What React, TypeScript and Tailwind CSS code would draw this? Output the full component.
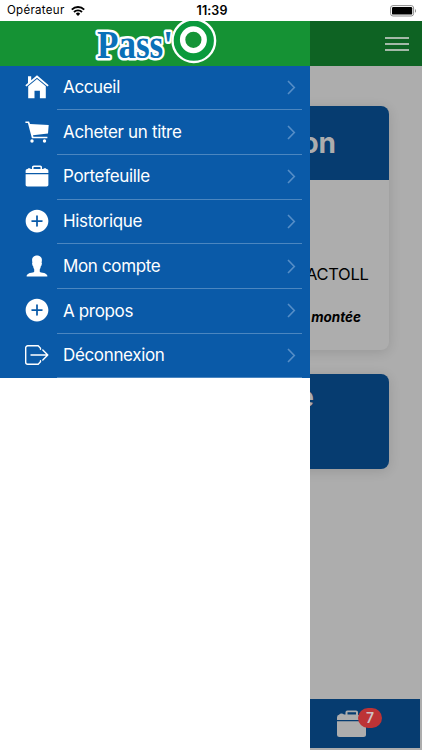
import type { ReactNode } from "react";
import { IoIosAddCircle, IoIosBriefcase, IoIosPerson } from "react-icons/io";

const menu: { label: string; icon: ReactNode }[] = [
  { label: "Accueil", icon: <HomeIcon /> },
  { label: "Acheter un titre", icon: <CartIcon /> },
  { label: "Portefeuille", icon: <IoIosBriefcase size={28} /> },
  { label: "Historique", icon: <IoIosAddCircle size={28} /> },
  { label: "Mon compte", icon: <IoIosPerson size={28} /> },
  { label: "A propos", icon: <IoIosAddCircle size={28} /> },
  { label: "Déconnexion", icon: <ExitIcon /> },
];

function HomeIcon() {
  return (
    <svg width="24" height="24" viewBox="0 0 24 24" fill="currentColor">
      <path d="M12 .3 23.700 10.200l-1.200 1.300L12 2.700 1.500 11.500.3 10.200 3 7.900V1.300h3.200v3.900Z" />
      <path d="m12 3.900 8.800 7.400V23.300h-5.900v-7.600H9.500v7.600H3.200V11.300Z" />
    </svg>
  );
}

function CartIcon() {
  return (
    <svg width="24" height="22" viewBox="0 0 24 22" fill="currentColor">
      <path d="M.4.6h3.700L5 3.100l18.700 1-.7 8.400L8 14.200l.4 1.600h14v1.500H6.900L2.900 2.100H.4Z" />
      <circle cx="7" cy="20" r="1.700" />
      <circle cx="19.500" cy="20" r="1.700" />
    </svg>
  );
}

function ExitIcon() {
  return (
    <svg width="24" height="20" viewBox="0 0 24 20" fill="none" stroke="currentColor" strokeWidth="1.4" strokeLinecap="round" strokeLinejoin="round">
      <path d="M15.500 4.200V3.200L13.200.8H2.700a2 2 0 0 0-2 2v14.400a2 2 0 0 0 2 2h10.500l2.300-2.400v-1" />
      <path d="M6 10h16.800M17.800 5l5 5-5 5" />
    </svg>
  );
}

function Logo() {
  return (
    <svg width="124" height="45" viewBox="92 20.500 124 45">
      <text
        x="96"
        y="57.500"
        textLength="76"
        lengthAdjust="spacingAndGlyphs"
        fontSize="39"
        fontWeight="700"
        fill="#0a70b8"
        stroke="#fff"
        strokeWidth="5"
        strokeLinejoin="round"
        paintOrder="stroke"
        className="font-['Liberation_Serif',serif]"
      >
        Pass'
      </text>
      <circle cx="192.800" cy="40.200" r="21.300" fill="#0a9a3c" stroke="#fff" strokeWidth="2.400" />
      <circle cx="192.400" cy="39.300" r="10.800" fill="#159437" stroke="#fff" strokeWidth="5.400" />
    </svg>
  );
}

function StatusBar() {
  return (
    <div className="flex h-[21px] shrink-0 items-center bg-white pr-[5px] pl-[7px] text-black">
      <div className="flex flex-1 items-center gap-1.5">
        <span className="pt-px text-[11.5px] tracking-[0.3px]">Opérateur</span>
        <svg width="14" height="10" viewBox="0 0 14 10" fill="none" stroke="#000" strokeWidth="1.9">
          <path d="M.8 3.6a8.8 8.8 0 0 1 12.4 0M3 6a5.7 5.7 0 0 1 8 0" />
          <path d="M4.8 7.7a3.1 3.1 0 0 1 4.4 0L7 10Z" fill="#000" stroke="none" />
        </svg>
      </div>
      <span className="pt-[2px] text-[12.5px] font-semibold tracking-[0.1px]">11:39</span>
      <div className="flex flex-1 justify-end">
        <svg width="27" height="12" viewBox="0 0 27 12">
          <rect x=".6" y=".6" width="23" height="10.4" rx="2.4" fill="#fff" stroke="#8d8d8d" />
          <rect x="2" y="2" width="20.2" height="7.6" rx="1.2" />
          <path d="M25 4v3.8c1.4-.5 1.4-3.3 0-3.8Z" fill="#8d8d8d" />
        </svg>
      </div>
    </div>
  );
}

function Drawer() {
  return (
    <aside className="absolute inset-y-0 left-0 flex w-[310px] flex-col bg-white">
      <div className="flex h-[44.5px] shrink-0 justify-center bg-[#159234]">
        <Logo />
      </div>
      <nav className="bg-[#0a5aa8] text-white">
        {menu.map((item) => (
          <a key={item.label} className="flex h-[44.7px] items-center">
            <span className="flex w-[57px] shrink-0 justify-center pb-0.5 pl-4">{item.icon}</span>
            <span className="mr-2 flex h-full flex-1 items-center justify-between border-b border-[#4b86c0] pr-[6px] pl-[6px] text-[17px] tracking-[-0.35px]">
              <span className="pt-px">{item.label}</span>
              <svg width="9" height="15" viewBox="0 0 9 15" fill="none" stroke="#568ec7" strokeWidth="1.6">
                <path d="m1 1 6.300 6.500L1 14" />
              </svg>
            </span>
          </a>
        ))}
      </nav>
    </aside>
  );
}

function Backdrop() {
  return (
    <main className="flex flex-1 flex-col bg-[#adadad]">
      <div className="flex h-[44.5px] shrink-0 items-center justify-end bg-[#0e6323] pt-px pr-[13px]">
        <div className="flex w-6 flex-col gap-1">
          <i className="h-0.5 bg-[#a4b9a8]" />
          <i className="h-0.5 bg-[#a4b9a8]" />
          <i className="h-0.5 bg-[#a4b9a8]" />
        </div>
      </div>

      <section className="mx-[33px] mt-[40.5px] h-[244px] shrink-0 rounded-[8px] shadow-[0_2px_12px_rgba(0,0,0,0.13)]">
        <h2 className="flex h-[74px] items-center justify-end rounded-t-[8px] bg-[#063c70] pr-[53px] text-[28px] font-bold text-[#adadad]">
          on
        </h2>
        <p className="mt-[82px] flex justify-end pr-[20.5px] text-[16.5px] leading-6 tracking-[-0.3px] text-black">ACTOLL</p>
        <p className="mt-[20.5px] flex justify-end pr-[28px] text-[13.5px] leading-5 font-bold text-black italic">montée</p>
      </section>

      <section className="mx-[33px] mt-[24px] h-[95px] shrink-0 rounded-[8px] bg-[#063c70] shadow-[0_2px_12px_rgba(0,0,0,0.13)]">
        <h2 className="flex justify-end pt-1.5 pr-[75px] text-[28px] leading-[34px] font-bold text-[#adadad]">e</h2>
      </section>

      <footer className="mt-auto mr-[2px] mb-[2px] flex h-[49px] shrink-0 items-center justify-end bg-[#063c70] pr-[53px]">
        <div className="relative">
          <svg width="30" height="28" viewBox="0 0 30 28" fill="#adadad">
            <path d="M0 10V7.500Q0 5 2 4.800 3 3.400 4.500 3.400T7 4.600h1.500V2.300Q8.500.5 10.300.5H19q2 0 2 1.800V5h5q3 0 3 3v2ZM10.500 4.600h8.500V2.300h-8.500Z" fillRule="evenodd" />
            <path d="M0 11.300h29V24.500q0 2.500-2.500 2.500h-24Q0 27 0 24.500Z" />
          </svg>
          <span className="absolute -top-[2px] left-[21px] flex h-[20px] w-[24px] items-center justify-center rounded-full bg-[#bd3335] text-[14px] font-semibold text-[#d0c4c4]">
            7
          </span>
        </div>
      </footer>
    </main>
  );
}

export default function App() {
  return (
    <div className="flex h-[750px] w-[422px] flex-col overflow-hidden font-[Inter,sans-serif]">
      <StatusBar />
      <div className="relative flex min-h-0 flex-1">
        <Backdrop />
        <Drawer />
      </div>
    </div>
  );
}
